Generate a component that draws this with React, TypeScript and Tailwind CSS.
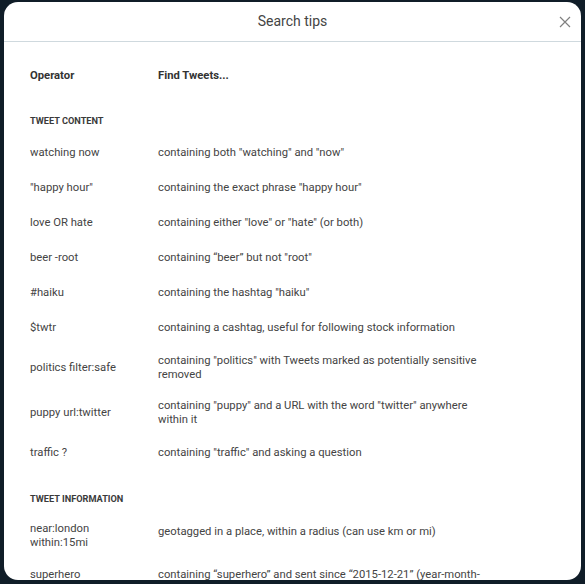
import React from 'react';

type Row = {
  op: React.ReactNode;
  desc: React.ReactNode;
  h: string;
  align?: string;
};

const content: Row[] = [
  { op: 'watching now', desc: 'containing both "watching" and "now"', h: 'h-[35px]' },
  { op: '"happy hour"', desc: 'containing the exact phrase "happy hour"', h: 'h-[35px]' },
  { op: 'love OR hate', desc: 'containing either "love" or "hate" (or both)', h: 'h-[35px]' },
  { op: 'beer -root', desc: 'containing “beer” but not "root"', h: 'h-[35px]' },
  { op: '#haiku', desc: 'containing the hashtag "haiku"', h: 'h-[35px]' },
  { op: '$twtr', desc: 'containing a cashtag, useful for following stock information', h: 'h-[35px]' },
  {
    op: 'politics filter:safe',
    desc: (
      <>
        containing "politics" with Tweets marked as potentially sensitive
        <br />
        removed
      </>
    ),
    h: 'h-[45px]',
  },
  {
    op: 'puppy url:twitter',
    desc: (
      <>
        containing "puppy" and a URL with the word "twitter" anywhere
        <br />
        within it
      </>
    ),
    h: 'h-[45px]',
  },
  { op: 'traffic ?', desc: 'containing "traffic" and asking a question', h: 'h-[35px]' },
];

const info: Row[] = [
  {
    op: (
      <>
        near:london
        <br />
        within:15mi
      </>
    ),
    desc: <span className="block pb-[7px]">geotagged in a place, within a radius (can use km or mi)</span>,
    h: 'h-[45px]',
  },
  {
    op: 'superhero',
    desc: (
      <>
        containing “superhero” and sent since “2015-12-21” (year-month-
        <br />
        day).
      </>
    ),
    h: 'h-[45px]',
    align: 'items-start pt-[10px]',
  },
];

const TipRow: React.FC<{ row: Row }> = ({ row }) => (
  <div className={`flex ${row.h} ${row.align ?? 'items-center'} shrink-0`}>
    <div className="w-[128px] shrink-0">{row.op}</div>
    <div className="whitespace-nowrap">{row.desc}</div>
  </div>
);

const Section: React.FC<{ title: string }> = ({ title }) => (
  <div className="h-[42.5px] shrink-0 pt-[21px] text-[9.2px] font-bold uppercase text-[#3a3a3a]">
    {title}
  </div>
);

export default function App() {
  return (
    <div
      className="w-[585px] h-[584px] overflow-hidden bg-[#101d28] pt-[2px] px-[4px]"
      style={{ fontFamily: 'Roboto, "Liberation Sans", sans-serif' }}
    >
      <div className="h-[578px] rounded-[14px] bg-white overflow-hidden flex flex-col">
        <div className="relative h-[40px] shrink-0 border-b border-[#cfd9de] flex items-center justify-center">
          <span className="text-[14px] text-[#444]">Search tips</span>
          <button className="absolute right-[10px] top-[14px] text-[#808080]">
            <svg width="12" height="12" viewBox="0 0 12 12" fill="none" stroke="currentColor" strokeWidth="1.2">
              <path d="M1 1L11 11M11 1L1 11" />
            </svg>
          </button>
        </div>

        <div className="flex flex-col pl-[26px] pt-[16px] text-[11.25px] leading-[14px] text-[#444]">
          <div className="flex h-[35px] items-center shrink-0 font-bold text-[#333]">
            <div className="w-[128px] shrink-0">Operator</div>
            <div>Find Tweets...</div>
          </div>

          <Section title="Tweet content" />
          {content.map((r, i) => (
            <TipRow key={i} row={r} />
          ))}

          <Section title="Tweet information" />
          {info.map((r, i) => (
            <TipRow key={i} row={r} />
          ))}
        </div>
      </div>
    </div>
  );
}
